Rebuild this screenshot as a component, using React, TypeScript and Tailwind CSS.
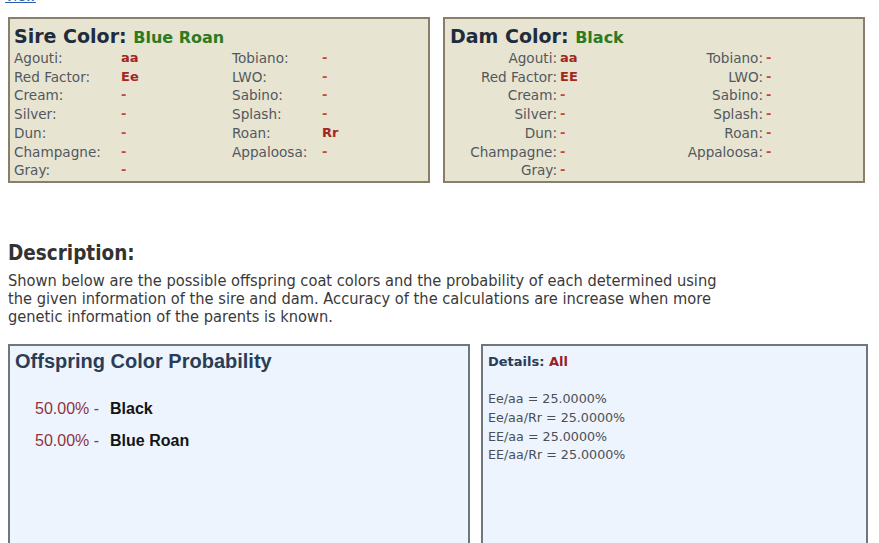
const SIRE = [
  ['Agouti:', 'aa', 'Tobiano:', '-'],
  ['Red Factor:', 'Ee', 'LWO:', '-'],
  ['Cream:', '-', 'Sabino:', '-'],
  ['Silver:', '-', 'Splash:', '-'],
  ['Dun:', '-', 'Roan:', 'Rr'],
  ['Champagne:', '-', 'Appaloosa:', '-'],
  ['Gray:', '-', '', ''],
];

const DAM = [
  ['Agouti:', 'aa', 'Tobiano:', '-'],
  ['Red Factor:', 'EE', 'LWO:', '-'],
  ['Cream:', '-', 'Sabino:', '-'],
  ['Silver:', '-', 'Splash:', '-'],
  ['Dun:', '-', 'Roan:', '-'],
  ['Champagne:', '-', 'Appaloosa:', '-'],
  ['Gray:', '-', '', ''],
];

const DETAILS = ['Ee/aa = 25.0000%', 'Ee/aa/Rr = 25.0000%', 'EE/aa = 25.0000%', 'EE/aa/Rr = 25.0000%'];

const OFFSPRING = [
  { pct: '50.00%', name: 'Black' },
  { pct: '50.00%', name: 'Blue Roan' },
];

const Val = ({ v }: { v: string }) => (
  <span className={`font-bold ${v === '-' ? 'text-[#c4453a]' : 'text-[#a3261f]'}`}>{v}</span>
);

const App = () => {
  return (
    <div className="w-[879px] h-[543px] overflow-hidden bg-white font-['DejaVu_Sans',sans-serif]">
      <div className="h-[5px] overflow-hidden pl-[5px]">
        <a className="block -mt-[11px] text-[13px] leading-[16px] text-[#2a5db0] underline">View</a>
      </div>

      {/* parent colours */}
      <div className="flex gap-[13px] pl-[8px] mt-[12px]">
        <div className="w-[422px] h-[166px] bg-[#e7e4d1] border-2 border-[#8b7d6c] pl-[4px] pt-[6px]">
          <div className="leading-[22px] text-[19px] font-bold text-[#1f2c3d]">
            Sire Color: <span className="text-[16px] text-[#2d7a1f]">Blue Roan</span>
          </div>
          <div className="grid grid-cols-[107px_111px_90px_1fr] text-[13.6px] leading-[18.7px] text-[#52585e]">
            {SIRE.map((r) => (
              <>
                <span key={r[0]}>{r[0]}</span>
                <span className="text-[13px]"><Val v={r[1]} /></span>
                <span>{r[2]}</span>
                <span className="text-[13px]">{r[3] && <Val v={r[3]} />}</span>
              </>
            ))}
          </div>
        </div>

        <div className="w-[422px] h-[166px] bg-[#e7e4d1] border-2 border-[#8b7d6c] pl-[5px] pt-[6px]">
          <div className="leading-[22px] text-[19px] font-bold text-[#1f2c3d]">
            Dam Color: <span className="text-[16px] text-[#2d7a1f]">Black</span>
          </div>
          <div className="grid grid-cols-[107px_103px_103px_1fr] text-[13.6px] leading-[18.7px] text-[#52585e]">
            {DAM.map((r) => (
              <>
                <span key={r[0]} className="text-right">{r[0]}</span>
                <span className="pl-[3px] text-[13px]"><Val v={r[1]} /></span>
                <span className="text-right">{r[2]}</span>
                <span className="pl-[3px] text-[13px]">{r[3] && <Val v={r[3]} />}</span>
              </>
            ))}
          </div>
        </div>
      </div>

      {/* description */}
      <div className="pl-[8px] mt-[58px]">
        <h2 className="text-[20.5px] leading-[24px] font-bold text-[#333333] font-['DejaVu_Sans_Condensed','DejaVu_Sans',sans-serif] [font-stretch:condensed]">
          Description:
        </h2>
        <p className="mt-[7px] text-[16.3px] leading-[18px] text-[#3a3a3a] font-['DejaVu_Sans_Condensed','DejaVu_Sans',sans-serif] [font-stretch:condensed]">
          Shown below are the possible offspring coat colors and the probability of each determined using
          <br />
          the given information of the sire and dam. Accuracy of the calculations are increase when more
          <br />
          genetic information of the parents is known.
        </p>
      </div>

      {/* results */}
      <div className="flex gap-[11px] pl-[8px] mt-[18px]">
        <div className="w-[462px] h-[220px] bg-[#edf4fd] border-2 border-[#6f767d] pl-[5px] pt-[3px]">
          <div className="text-[20px] leading-[24px] font-bold text-[#2b3d55] font-['Liberation_Sans',Arial,sans-serif]">
            Offspring Color Probability
          </div>
          <div className="mt-[26px] pl-[20px] flex flex-col gap-[12px] font-['Liberation_Sans',Arial,sans-serif] text-[16px] leading-[20px]">
            {OFFSPRING.map((o) => (
              <div key={o.name} className="flex gap-[11px]">
                <span className="text-[#8e3344]">{o.pct} -</span>
                <span className="font-bold text-[#141414]">{o.name}</span>
              </div>
            ))}
          </div>
        </div>

        <div className="w-[387px] h-[220px] bg-[#edf4fd] border-2 border-[#6f767d] pl-[5px] pt-[6px]">
          <div className="text-[13px] leading-[20px] font-bold text-[#2b3d55]">
            Details: <span className="text-[#9a1c28]">All</span>
          </div>
          <div className="mt-[18px] text-[12.7px] leading-[18.8px] text-[#4a4f55]">
            {DETAILS.map((d) => (
              <div key={d}>{d}</div>
            ))}
          </div>
        </div>
      </div>
    </div>
  );
};

export default App;
